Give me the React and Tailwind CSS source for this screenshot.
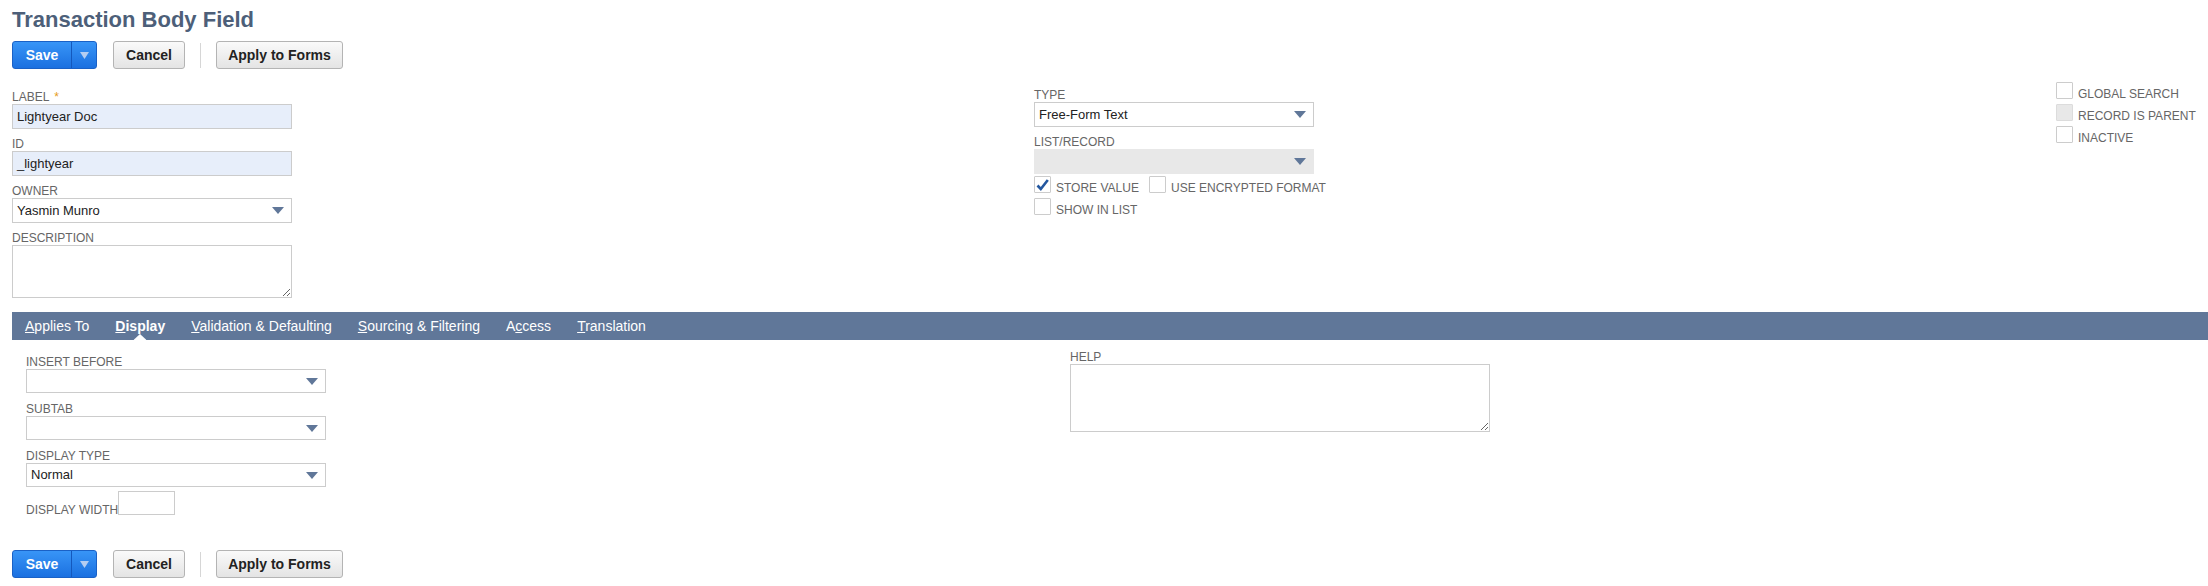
import React from 'react'

const labelCls = "block text-[12px] leading-[14px] text-[#666] uppercase"

function Arrow() {
    return (
        <svg width="12" height="7" viewBox="0 0 12 7" className="shrink-0">
            <polygon points="0,0 12,0 6,7" fill="#607799" />
        </svg>
    )
}

function SelectBox({ value, className = '', disabled }) {
    return (
        <div className={`flex items-center justify-between pl-[4px] pr-[7px] text-[13px] text-[#222] ${disabled ? 'bg-[#e8e8e8] border border-[#e8e8e8]' : 'bg-white border border-[#cccccc]'} ${className}`}>
            <span>{value}</span>
            <Arrow />
        </div>
    )
}

function TextBox({ value, className = '' }) {
    return (
        <div className={`flex items-center pl-[4px] text-[13px] text-[#222] border border-[#cccccc] ${className}`}>
            {value}
        </div>
    )
}

function Checkbox({ label, checked, disabled }) {
    return (
        <div className="flex items-end h-[17px]">
            <span className={`relative w-[17px] h-[17px] border rounded-[1px] ${disabled ? 'bg-[#e8e8e8] border-[#dcdcdc]' : 'bg-white border-[#cccccc]'}`}>
                {checked && (
                    <svg width="17" height="17" viewBox="0 0 17 17" className="absolute -left-px -top-px">
                        <path d="M3.5 9.5 L6.8 13 L13.8 4" fill="none" stroke="#24579f" strokeWidth="2.6" />
                    </svg>
                )}
            </span>
            <span className="ml-[5px] text-[12px] leading-[10px] text-[#666] uppercase whitespace-nowrap">{label}</span>
        </div>
    )
}

function ButtonBar({ className = '' }) {
    return (
        <div className={`flex items-center ${className}`}>
            <div className="flex h-[28px] w-[85px] rounded-[3px] border border-[#1a61c6] bg-gradient-to-b from-[#3895f7] to-[#1b70e0] overflow-hidden">
                <div className="w-[58px] flex items-center justify-center text-white font-bold text-[14px]">Save</div>
                <div className="flex-1 border-l border-[#1458bd] flex items-center justify-center">
                    <svg width="9" height="7" viewBox="0 0 9 7">
                        <polygon points="0,0 9,0 4.5,7" fill="#b4cdf1" />
                    </svg>
                </div>
            </div>
            <button className="ml-[16px] h-[28px] w-[72px] rounded-[3px] border border-[#b4b4b4] bg-gradient-to-b from-[#fafafa] to-[#e4e4e4] text-[14px] font-bold text-[#222]">Cancel</button>
            <div className="ml-[15px] w-px h-[25px] bg-[#d6d6d6]" />
            <button className="ml-[15px] h-[28px] w-[127px] rounded-[3px] border border-[#b4b4b4] bg-gradient-to-b from-[#fafafa] to-[#e4e4e4] text-[14px] font-bold text-[#222]">Apply to Forms</button>
        </div>
    )
}

const tabs = [
    { pre: '', key: 'A', rest: 'pplies To' },
    { pre: '', key: 'D', rest: 'isplay', active: true },
    { pre: '', key: 'V', rest: 'alidation & Defaulting' },
    { pre: '', key: 'S', rest: 'ourcing & Filtering' },
    { pre: 'A', key: 'c', rest: 'cess' },
    { pre: '', key: 'T', rest: 'ranslation' },
]

export default function App() {
    return (
        <div className="w-[2208px] h-[586px] overflow-hidden bg-white pl-3 pt-[7px] font-['Liberation_Sans',Arial,sans-serif]">
            <h1 className="text-[22px] leading-[26px] font-bold text-[#4d5f79]">Transaction Body Field</h1>
            <ButtonBar className="mt-[8px]" />

            {/* main fields */}
            <div className="mt-[21px] grid grid-cols-[1022px_1022px_1fr]">
                <div className="flex flex-col">
                    <label className={labelCls}>Label <span className="text-[#e59b20] ml-[2px]">*</span></label>
                    <TextBox value="Lightyear Doc" className="w-[280px] h-[25px] bg-[#e7eefa]" />
                    <label className={`${labelCls} mt-[8px]`}>ID</label>
                    <TextBox value="_lightyear" className="w-[280px] h-[25px] bg-[#e7eefa]" />
                    <label className={`${labelCls} mt-[8px]`}>Owner</label>
                    <SelectBox value="Yasmin Munro" className="w-[280px] h-[25px]" />
                    <label className={`${labelCls} mt-[8px]`}>Description</label>
                    <textarea readOnly className="w-[280px] h-[53px] border border-[#cccccc] outline-none" />
                </div>
                <div className="flex flex-col -mt-[2px]">
                    <label className={labelCls}>Type</label>
                    <SelectBox value="Free-Form Text" className="w-[280px] h-[25px]" />
                    <label className={`${labelCls} mt-[8px]`}>List/Record</label>
                    <SelectBox value="" disabled className="w-[280px] h-[25px]" />
                    <div className="mt-[2px] flex gap-[98px] w-max">
                        <Checkbox label="Store Value" checked />
                    </div>
                    <div className="-mt-[17px] ml-[115px]">
                        <Checkbox label="Use Encrypted Format" />
                    </div>
                    <div className="mt-[5px]">
                        <Checkbox label="Show In List" />
                    </div>
                </div>
                <div className="flex flex-col gap-[5px] -mt-[8px]">
                    <Checkbox label="Global Search" />
                    <Checkbox label="Record Is Parent" disabled />
                    <Checkbox label="Inactive" />
                </div>
            </div>

            {/* tab bar */}
            <div className="mt-[14px] h-[28px] bg-[#607799] flex items-center gap-[26px] pl-[13px]">
                {tabs.map((t, i) => (
                    <div key={i} className={`relative h-full flex items-center text-[14px] text-white ${t.active ? 'font-bold' : ''}`}>
                        <span>{t.pre}<u>{t.key}</u>{t.rest}</span>
                        {t.active && (
                            <svg width="13" height="6" viewBox="0 0 13 6" className="absolute bottom-0 left-1/2 -translate-x-1/2">
                                <polygon points="0,6 6.5,0 13,6" fill="#ffffff" />
                            </svg>
                        )}
                    </div>
                ))}
            </div>

            {/* display tab content */}
            <div className="pl-[14px] grid grid-cols-[1044px_1fr]">
                <div className="flex flex-col mt-[15px]">
                    <label className={labelCls}>Insert Before</label>
                    <SelectBox value="" className="w-[300px] h-[24px]" />
                    <label className={`${labelCls} mt-[9px]`}>Subtab</label>
                    <SelectBox value="" className="w-[300px] h-[24px]" />
                    <label className={`${labelCls} mt-[9px]`}>Display Type</label>
                    <SelectBox value="Normal" className="w-[300px] h-[24px]" />
                    <div className="mt-[4px] flex items-end">
                        <label className={`${labelCls} -mb-[2px]`}>Display Width</label>
                        <div className="w-[57px] h-[24px] border border-[#cccccc]" />
                    </div>
                </div>
                <div className="flex flex-col mt-[10px]">
                    <label className={labelCls}>Help</label>
                    <textarea readOnly className="w-[420px] h-[68px] border border-[#cccccc] outline-none" />
                </div>
            </div>

            <ButtonBar className="mt-[35px]" />
        </div>
    )
}
